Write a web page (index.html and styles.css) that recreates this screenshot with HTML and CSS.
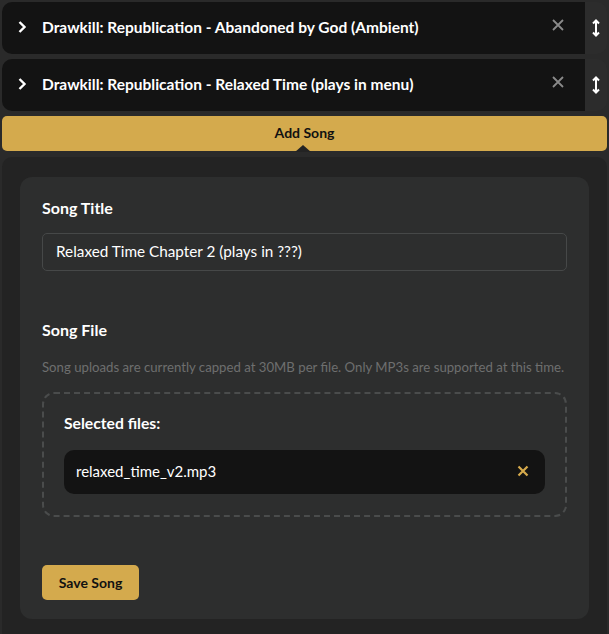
FILE: index.html
```html
<!DOCTYPE html>
<html lang="en">
<head>
  <meta charset="UTF-8">
  <title>Songs</title>
  <link rel="stylesheet" href="styles.css">
</head>
<body>
  <div class="songs">

    <!-- Lista de músicas -->
    <div class="song-row">
      <div class="song-main">
        <span class="chevron">
          <svg width="10" height="14" viewBox="0 0 10 14"><path d="M2.5 2 L7.5 7 L2.5 12" fill="none" stroke="#fff" stroke-width="2.4"/></svg>
        </span>
        <span class="song-name">Drawkill: Republication - Abandoned by God (Ambient)</span>
        <span class="remove">
          <svg width="12" height="12" viewBox="0 0 12 12"><path d="M1 1 L11 11 M11 1 L1 11" stroke="#8a8a8a" stroke-width="1.8"/></svg>
        </span>
      </div>
      <div class="handle">
        <svg width="8" height="18" viewBox="0 0 8 18"><path d="M4 2 V16 M1 4.5 L4 1.5 L7 4.5 M1 13.5 L4 16.5 L7 13.5" fill="none" stroke="#fff" stroke-width="2"/></svg>
      </div>
    </div>

    <div class="song-row">
      <div class="song-main">
        <span class="chevron">
          <svg width="10" height="14" viewBox="0 0 10 14"><path d="M2.5 2 L7.5 7 L2.5 12" fill="none" stroke="#fff" stroke-width="2.4"/></svg>
        </span>
        <span class="song-name">Drawkill: Republication - Relaxed Time (plays in menu)</span>
        <span class="remove">
          <svg width="12" height="12" viewBox="0 0 12 12"><path d="M1 1 L11 11 M11 1 L1 11" stroke="#8a8a8a" stroke-width="1.8"/></svg>
        </span>
      </div>
      <div class="handle">
        <svg width="8" height="18" viewBox="0 0 8 18"><path d="M4 2 V16 M1 4.5 L4 1.5 L7 4.5 M1 13.5 L4 16.5 L7 13.5" fill="none" stroke="#fff" stroke-width="2"/></svg>
      </div>
    </div>

    <button class="add-song">Add Song</button>

    <!-- Formulário -->
    <div class="panel">
      <div class="card">
        <label class="field-label">Song Title</label>
        <input class="text-input" type="text" value="Relaxed Time Chapter 2 (plays in ???)">

        <label class="field-label file-label">Song File</label>
        <p class="hint">Song uploads are currently capped at 30MB per file. Only MP3s are supported at this time.</p>

        <div class="dropzone">
          <div class="selected-title">Selected files:</div>
          <div class="file-item">
            <span>relaxed_time_v2.mp3</span>
            <svg width="12" height="12" viewBox="0 0 12 12"><path d="M1.5 1.5 L10.5 10.5 M10.5 1.5 L1.5 10.5" stroke="#d6aa4c" stroke-width="2.2"/></svg>
          </div>
        </div>

        <button class="save-song">Save Song</button>
      </div>
    </div>

  </div>
</body>
</html>
```

FILE: styles.css
```css
* { box-sizing: border-box; margin: 0; padding: 0; }
body {
  background: #2a2a2a;
  color: #fff;
  font-family: Lato, "Noto Sans", sans-serif;
  overflow: hidden;
}
.songs {
  padding: 2px 2px 0 2px;
  display: flex;
  flex-direction: column;
  gap: 5px;
}
.song-row {
  display: flex;
  height: 52px;
  border-radius: 10px;
  overflow: hidden;
}
.song-main {
  flex: 1;
  background: #131313;
  display: flex;
  align-items: center;
  padding: 0 0 2px 15px;
}
.chevron {
  width: 25px;
  display: flex;
  align-items: center;
}
.song-name {
  flex: 1;
  font-weight: bold;
  font-size: 15.5px;
}
.remove {
  width: 54px;
  display: flex;
  align-items: center;
  justify-content: center;
  margin-top: -4px;
}
.handle {
  width: 22px;
  background: #2c2c2c;
  display: flex;
  align-items: center;
  justify-content: center;
  border-radius: 0 10px 10px 0;
}
.add-song {
  position: relative;
  height: 35px;
  background: #d4aa4d;
  border: none;
  border-radius: 5px;
  font-family: inherit;
  font-weight: bold;
  font-size: 14px;
  color: #111;
  padding-bottom: 2px;
}
.add-song::after {
  content: "";
  position: absolute;
  left: 50%;
  bottom: -1px;
  margin-left: -10px;
  border: 7px solid transparent;
  border-bottom-color: #232323;
  border-left-width: 8px;
  border-right-width: 8px;
}
.panel {
  margin-top: 1px;
  background: #232323;
  border-radius: 10px 10px 0 0;
  padding: 20px 18px 30px;
}
.card {
  background: #2d2e2e;
  border-radius: 12px;
  padding: 21px 22px 19px;
  display: flex;
  flex-direction: column;
  align-items: flex-start;
}
.field-label {
  font-weight: bold;
  font-size: 16px;
  margin-bottom: 16px;
}
.text-input {
  width: 100%;
  height: 38px;
  background: #2d2e2e;
  border: 1px solid #464848;
  border-radius: 5px;
  color: #fff;
  font-family: inherit;
  font-size: 15.3px;
  padding: 0 13px 2px;
}
.file-label {
  margin-top: 49px;
  margin-bottom: 20px;
}
.hint {
  color: #6e6f6f;
  font-size: 13.2px;
  margin-bottom: 17px;
}
.dropzone {
  width: 100%;
  border: 2px dashed #4a4c4c;
  border-radius: 12px;
  padding: 20px 20px 21px;
}
.selected-title {
  font-weight: bold;
  font-size: 15.7px;
  margin-bottom: 18px;
}
.file-item {
  height: 44px;
  background: #131313;
  border-radius: 10px;
  display: flex;
  align-items: center;
  justify-content: space-between;
  padding: 0 16px 2px 12px;
  font-size: 15px;
}
.save-song {
  margin-top: 48px;
  background: #d4aa4d;
  border: none;
  border-radius: 5px;
  width: 97px;
  height: 35px;
  font-family: inherit;
  font-weight: bold;
  font-size: 14px;
  color: #111;
}
```
